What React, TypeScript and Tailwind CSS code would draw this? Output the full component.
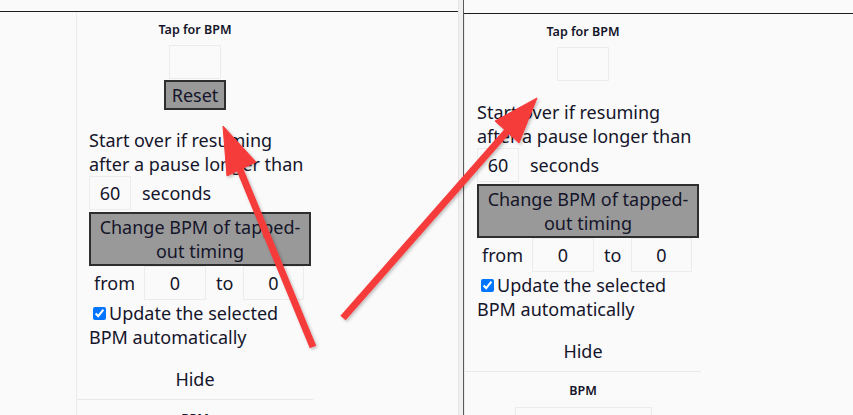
import React from "react";

const font = { fontFamily: '"Noto Sans", "Open Sans", sans-serif' };

function Box({ value, className }: { value?: string; className: string }) {
  return (
    <div
      className={`flex items-center justify-center border border-[#ececec] bg-[#fafafa] text-[18px] ${className}`}
    >
      {value}
    </div>
  );
}

function TapPanel({ showReset }: { showReset: boolean }) {
  return (
    <div className="flex w-[237px] flex-col border-l border-[#ebebeb] text-[#15152a]">
      <div className="flex flex-col items-center pt-[10px]">
        <div className="text-[12.5px] font-semibold leading-[16px]">Tap for BPM</div>
        <Box className="mt-[7px] h-[34px] w-[52px]" />
        {showReset && (
          <div className="mt-[1px] flex h-[30px] w-[62px] items-center justify-center border-2 border-[#2e2e2e] bg-[#999] text-[18px] leading-none">
            Reset
          </div>
        )}
      </div>
      <div
        className={`${showReset ? "mt-[18px]" : "mt-[19px]"} pl-[12px] pr-[2px] text-[18px] leading-[24px]`}
      >
        <div className="whitespace-nowrap">Start over if resuming</div>
        <div className="whitespace-nowrap">after a pause longer than</div>
        <div className="flex items-center">
          <Box value="60" className="h-[34px] w-[42px]" />
          <span className="ml-[11px]">seconds</span>
        </div>
        <div className="mt-[2px] flex h-[54px] w-[222px] flex-col items-center justify-center border-2 border-[#2e2e2e] bg-[#999] text-center leading-[24px]">
          <span>Change BPM of tapped-</span>
          <span>out timing</span>
        </div>
        <div className="flex items-center">
          <span className="ml-[5px] w-[50px]">from</span>
          <Box value="0" className="h-[34px] w-[62px]" />
          <span className="ml-[10px] w-[27px]">to</span>
          <Box value="0" className="h-[34px] w-[61px]" />
        </div>
        <div className="mt-[1px]">
          <div className="flex items-center">
            <input
              type="checkbox"
              checked
              readOnly
              className="ml-[4px] mr-[3px] h-[13px] w-[13px] accent-[#0075ff]"
            />
            <span>Update the selected</span>
          </div>
          <div>BPM automatically</div>
        </div>
      </div>
      <div className="mt-[18px] text-center text-[18px] leading-[24px]">Hide</div>
      <div className="mt-[8px] border-t border-[#e8e8e8]" />
      <div className="flex flex-col items-center pt-[11px]">
        <div className="text-[12.5px] font-semibold leading-[16px]">BPM</div>
        <Box className="mt-[8px] h-[34px] w-[137px]" />
      </div>
    </div>
  );
}

function Arrows() {
  return (
    <svg
      className="pointer-events-none absolute left-0 top-0"
      width="853"
      height="415"
      viewBox="0 0 853 415"
    >
      <defs>
        <filter id="sh" x="-20%" y="-20%" width="140%" height="140%">
          <feDropShadow dx="1.5" dy="1.5" stdDeviation="1.5" floodColor="#000" floodOpacity="0.25" />
        </filter>
      </defs>
      <g filter="url(#sh)" fill="#f63b3b" stroke="#f63b3b">
        <line x1="313" y1="347" x2="236" y2="160" strokeWidth="7" />
        <polygon points="223,126 256,162 227,176" strokeWidth="1" strokeLinejoin="round" />
        <line x1="343" y1="318" x2="510" y2="128" strokeWidth="7" />
        <polygon points="537,98 519,143 495,121" strokeWidth="1" strokeLinejoin="round" />
      </g>
    </svg>
  );
}

export default function App() {
  return (
    <div className="relative flex h-[415px] w-[853px] overflow-hidden bg-[#fafafa]" style={font}>
      {/* left shot */}
      <div className="flex w-[458px] flex-col">
        <div className="h-[11px] shrink-0" />
        <div className="h-px shrink-0 bg-[#1e1e1e]" />
        <div className="flex pl-[76px]">
          <TapPanel showReset />
        </div>
      </div>
      {/* right shot */}
      <div className="flex w-[395px]">
        <div className="w-px shrink-0 bg-[#e4e4e4]" />
        <div className="w-[4px] shrink-0 bg-[#f0f0f0]" />
        <div className="w-px shrink-0 bg-[#5a5a5a]" />
        <div className="flex flex-1 flex-col">
          <div className="h-[13px] shrink-0" />
          <div className="h-px shrink-0 bg-[#1e1e1e]" />
          <div className="flex">
            <TapPanel showReset={false} />
          </div>
        </div>
      </div>
      <Arrows />
    </div>
  );
}
